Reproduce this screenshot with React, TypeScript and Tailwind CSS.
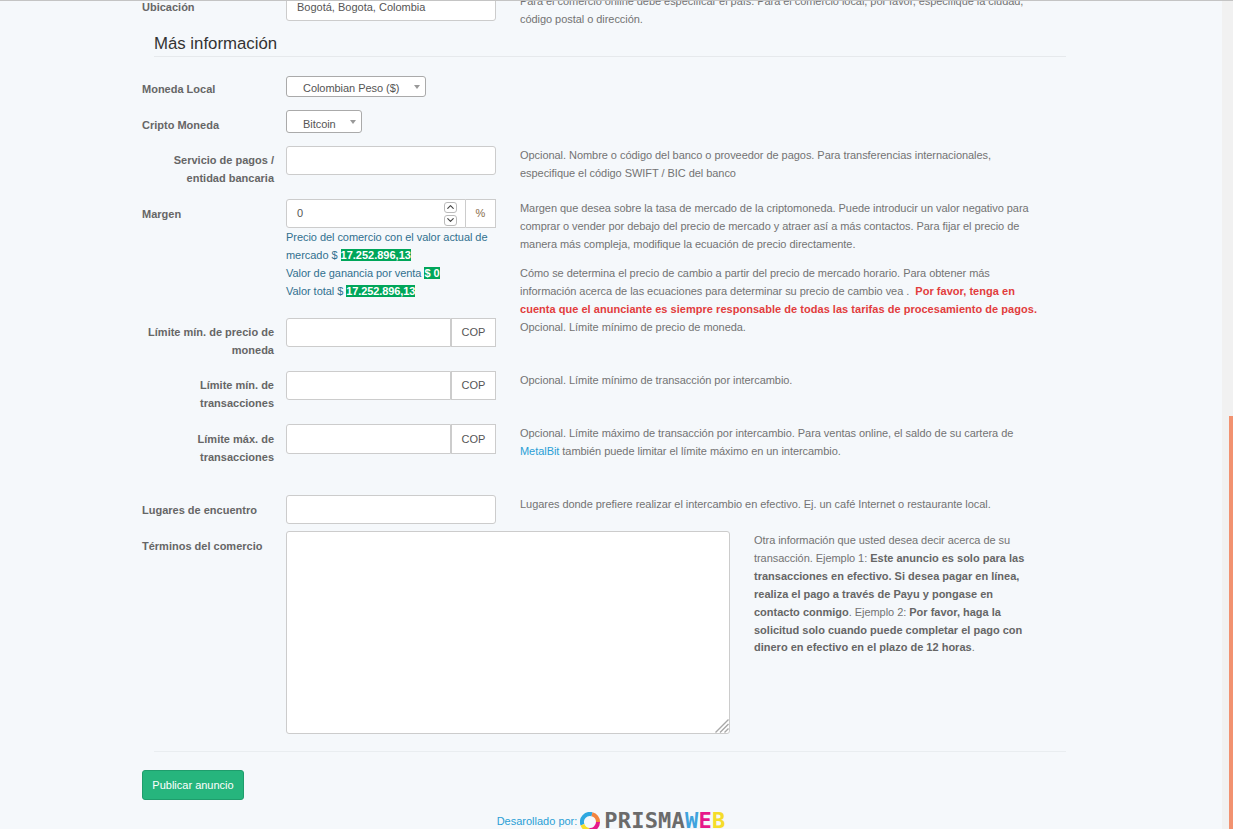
import { ChevronDown, ChevronUp } from 'lucide-react';

const inputClass = 'h-full w-full bg-white border border-[#ccc] rounded-[3px] px-[10px] text-[11px] text-[#555] outline-none';

function Label({ children, left }: { children: React.ReactNode; left?: boolean }) {
  return (
    <label className={`block w-[132px] shrink-0 font-bold text-[11px] leading-[18px] text-[#666] ${left ? 'text-left' : 'text-right'}`}>
      {children}
    </label>
  );
}

function Help({ children }: { children: React.ReactNode }) {
  return <div className="ml-[24px] w-[522px] pt-[1px] text-[11px] leading-[17.8px] tracking-[-0.05px] text-[#737373]">{children}</div>;
}

function SelectButton({ label, width, textPad }: { label: string; width: string; textPad: string }) {
  return (
    <button className={`${width} ${textPad} h-full flex items-center bg-white border border-[#aaa] rounded-[3px] pl-[16px] text-[11px] tracking-[-0.05px] text-[#555] relative`}>
      {label}
      <span className="absolute right-[5px] top-1/2 -translate-y-1/2 w-0 h-0 border-x-[3px] border-x-transparent border-t-[4px] border-t-[#999]" />
    </button>
  );
}

function CopRow({ label, children, low }: { label: React.ReactNode; children?: React.ReactNode; low?: boolean }) {
  return (
    <div className="flex h-[53px]">
      <div className={low ? 'pt-[6px]' : 'pt-[5px]'}>
        <Label>{label}</Label>
      </div>
      <div className={`ml-[12px] w-[210px] flex shrink-0 ${low ? 'h-[30px]' : 'h-[29px]'}`}>
        <input className="flex-1 min-w-0 bg-white border border-[#ccc] rounded-l-[3px] outline-none" />
        <span className="w-[45px] flex items-center justify-center bg-white border border-[#ccc] text-[11px] text-[#555]">COP</span>
      </div>
      <Help>{children}</Help>
    </div>
  );
}

function Logo() {
  return (
    <span className="inline-flex items-start ml-[3px] h-[24px]">
      <svg width="20" height="20" viewBox="0 0 20 20" fill="none" strokeWidth="4" className="shrink-0 mt-[3px]">
        <path d="M2.5 12.8 A8 8 0 0 1 12 2.2" stroke="#2ea8e0" />
        <path d="M12 2.2 A8 8 0 0 1 18 10" stroke="#f2843f" />
        <path d="M18 10 A8 8 0 0 1 9 18" stroke="#e6188a" />
        <path d="M9 18 A8 8 0 0 1 2.5 12.8" stroke="#f7e02a" />
      </svg>
      <span className="ml-[4px] font-['DejaVu_Sans_Mono',monospace] font-bold text-[22px] leading-[24px] tracking-[0.2px] text-[#6b6b6b]">
        PRISMA<span className="text-[#3fa3dd]">W</span>
        <span className="text-[#e6188a]">E</span>
        <span className="text-[#f5dc2a]">B</span>
      </span>
    </span>
  );
}

export default function App() {
  return (
    <div className="h-[829px] overflow-hidden bg-[#f5f8fb] font-['Liberation_Sans',Arial,sans-serif] border-t border-[#c4c4c4] flex">
      <div className="w-[1222px] shrink-0">
        <div className="pl-[142px] -mt-[9px]">
          {/* Ubicacion */}
          <div className="flex h-[41px]">
            <div className="pt-[6px]">
              <Label left>Ubicación</Label>
            </div>
            <div className="ml-[12px] w-[210px] h-[29px] shrink-0">
              <input className={inputClass} defaultValue="Bogotá, Bogota, Colombia" />
            </div>
            <Help>
              Para el comercio online debe especificar el país. Para el comercio local, por favor, especifique la ciudad,
              código postal o dirección.
            </Help>
          </div>

          <div className="ml-[12px] w-[912px] h-[24px] border-b border-[#e6e9ec] text-[16.8px] leading-[22px] text-[#333]">Más información</div>

          <div className="mt-[19px] flex h-[21px]">
            <div className="pt-[4px]">
              <Label left>Moneda Local</Label>
            </div>
            <div className="ml-[12px]">
              <SelectButton label="Colombian Peso ($)" width="w-[140px]" textPad="pt-[3px]" />
            </div>
          </div>

          <div className="mt-[13px] flex h-[23px]">
            <div className="pt-[6px]">
              <Label left>Cripto Moneda</Label>
            </div>
            <div className="ml-[12px]">
              <SelectButton label="Bitcoin" width="w-[76px]" textPad="pt-[6px]" />
            </div>
          </div>

          <div className="mt-[13px] flex h-[53px]">
            <div className="pt-[5px]">
              <Label>Servicio de pagos / entidad bancaria</Label>
            </div>
            <div className="ml-[12px] w-[210px] h-[29px] shrink-0">
              <input className={inputClass} />
            </div>
            <Help>
              Opcional. Nombre o código del banco o proveedor de pagos. Para transferencias internacionales, especifique el
              código SWIFT / BIC del banco
            </Help>
          </div>

          <div className="flex h-[119px]">
            <div className="pt-[6px]">
              <Label left>Margen</Label>
            </div>
            <div className="ml-[12px] w-[210px] shrink-0">
              <div className="flex h-[29px]">
                <div className="flex-1 flex items-center bg-white border border-[#ccc] rounded-l-[3px] pl-[10px] pr-[8px] text-[11px] text-[#555]">
                  <span className="flex-1">0</span>
                  <span className="flex flex-col gap-[2px]">
                    <span className="w-[13px] h-[11px] flex items-center justify-center border border-[#bbb] rounded-[3px]">
                      <ChevronUp size={12} strokeWidth={2.5} className="text-[#444]" />
                    </span>
                    <span className="w-[13px] h-[11px] flex items-center justify-center border border-[#bbb] rounded-[3px]">
                      <ChevronDown size={12} strokeWidth={2.5} className="text-[#444]" />
                    </span>
                  </span>
                </div>
                <span className="w-[30px] flex items-center justify-center bg-white border border-l-0 border-[#ccc] text-[11px] text-[#8a6d4b]">%</span>
              </div>
              <div className="text-[11px] leading-[18px] tracking-[-0.05px] text-[#31708f]">
                <div>
                  Precio del comercio con el valor actual de mercado ${' '}
                  <b className="bg-[#00a65a] text-white tracking-normal">17.252.896,13</b>
                </div>
                <div>
                  Valor de ganancia por venta <b className="bg-[#00a65a] text-white tracking-normal">$ 0</b>
                </div>
                <div>
                  Valor total $ <b className="bg-[#00a65a] text-white tracking-[-0.1px]">17.252.896,13</b>
                </div>
              </div>
            </div>
            <Help>
              <p>
                Margen que desea sobre la tasa de mercado de la criptomoneda. Puede introducir un valor negativo para comprar o
                vender por debajo del precio de mercado y atraer así a más contactos. Para fijar el precio de manera más compleja,
                modifique la ecuación de precio directamente.
              </p>
              <p className="mt-[12px]">
                Cómo se determina el precio de cambio a partir del precio de mercado horario. Para obtener más información acerca
                de las ecuaciones para determinar su precio de cambio vea .{' '}
                <b className="ml-[3px] text-[#e23d3d] tracking-[0.03px]">
                  Por favor, tenga en cuenta que el anunciante es siempre responsable de todas las tarifas de procesamiento de pagos.
                </b>
              </p>
              <p>Opcional. Límite mínimo de precio de moneda.</p>
            </Help>
          </div>

          <CopRow label="Límite mín. de precio de moneda" />
          <CopRow label="Límite mín. de transacciones">Opcional. Límite mínimo de transacción por intercambio.</CopRow>
          <CopRow label="Límite máx. de transacciones" low>
            Opcional. Límite máximo de transacción por intercambio. Para ventas online, el saldo de su cartera de{' '}
            <span className="text-[#2a9fd6]">MetalBit</span> también puede limitar el límite máximo en un intercambio.
          </CopRow>

          <div className="mt-[18px] flex h-[36px]">
            <div className="pt-[6px]">
              <Label left>Lugares de encuentro</Label>
            </div>
            <div className="ml-[12px] w-[210px] h-[29px] shrink-0">
              <input className={inputClass} />
            </div>
            <Help>Lugares donde prefiere realizar el intercambio en efectivo. Ej. un café Internet o restaurante local.</Help>
          </div>

          <div className="flex h-[203px]">
            <div className="pt-[6px]">
              <Label left>Términos del comercio</Label>
            </div>
            <div className="relative ml-[12px] w-[444px] h-[203px] shrink-0">
              <textarea className="block w-full h-full bg-white border border-[#ccc] rounded-[3px] outline-none resize-none" />
              <svg width="14" height="14" viewBox="0 0 14 14" stroke="#a8a8a8" strokeWidth="1.4" className="absolute right-[1px] bottom-[1px]">
                <path d="M0.5 13.5 L13.5 0.5 M5 13.5 L13.5 5 M9.5 13.5 L13.5 9.5" />
              </svg>
            </div>
            <div className="ml-[24px] w-[280px] pt-[1px] text-[11px] leading-[17.9px] tracking-[-0.05px] text-[#737373]">
              Otra información que usted desea decir acerca de su transacción. Ejemplo 1:{' '}
              <b className="text-[#666] tracking-normal">
                Este anuncio es solo para las transacciones en efectivo. Si desea pagar en línea, realiza el pago a través de Payu y
                pongase en contacto conmigo
              </b>
              . Ejemplo 2:{' '}
              <b className="text-[#666] tracking-normal">
                Por favor, haga la solicitud solo cuando puede completar el pago con dinero en efectivo en el plazo de 12 horas
              </b>
              .
            </div>
          </div>

          <div className="ml-[12px] w-[912px] mt-[17px] border-t border-[#e9edf0]" />

          <button className="mt-[18px] h-[30px] w-[102px] bg-[#26b57d] border border-[#1f9d6c] rounded-[3px] text-[11px] text-white">
            Publicar anuncio
          </button>
        </div>

        <div className="mt-[9px] flex items-start justify-center text-[11px] leading-[24px] text-[#2a9fd6]">
          Desarollado por:
          <Logo />
        </div>
      </div>

      <div className="flex-1 bg-[#f1f1f1] flex flex-col">
        <div className="mt-[415px] ml-[7px] flex-1 bg-[#f29270]" />
      </div>
    </div>
  );
}
